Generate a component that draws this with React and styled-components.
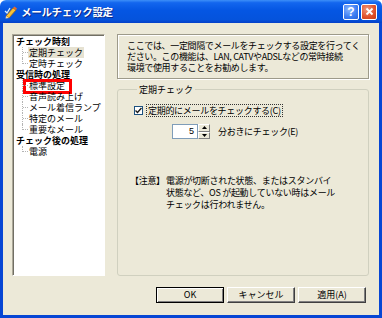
import React from 'react';
import styled, { createGlobalStyle } from 'styled-components';

const GlobalStyle = createGlobalStyle`
  html, body { margin: 0; padding: 0; }
  body {
    width: 382px;
    height: 318px;
    overflow: hidden;
    font-family: "Noto Sans CJK JP", "DejaVu Sans", sans-serif;
  }
`;

const Window = styled.div`
  width: 382px;
  height: 318px;
  display: flex;
  flex-direction: column;
`;

const TitleBar = styled.div`
  height: 23px;
  flex: none;
  display: flex;
  align-items: center;
  padding: 0 5px 0 4px;
  box-sizing: border-box;
  background: linear-gradient(#3d8ff8 0%, #1366ee 12%, #0556e3 45%, #0553dc 85%, #0440c8 100%);
  border-radius: 6px 6px 0 0;
`;

const TitleText = styled.span`
  margin-left: 3px;
  flex: 1;
  color: #fff;
  font-size: 10.5px;
  font-weight: bold;
  letter-spacing: -0.3px;
  text-shadow: 1px 1px 0 #0a2a8a;
`;

const CaptionButton = styled.div`
  width: 16px;
  height: 16px;
  margin-left: 2px;
  box-sizing: border-box;
  border: 1px solid #fff;
  border-radius: 2px;
  display: flex;
  align-items: center;
  justify-content: center;
  color: #fff;
  font-family: "Liberation Sans", sans-serif;
  font-weight: bold;
  font-size: 12px;
  background: ${p => p.close
    ? 'radial-gradient(circle at 35% 30%, #f0977a, #e0502a 60%, #c73b14)'
    : 'radial-gradient(circle at 35% 30%, #8ab6ff, #3a7cf2 60%, #2a62d8)'};
`;

const Frame = styled.div`
  flex: 1;
  display: flex;
  flex-direction: column;
  background: #ece9d8;
  border: 3px solid #0746d4;
  border-top: none;
  padding: 11px 10px 0 9px;
  font-size: 9px;
  color: #000;
`;

const Main = styled.div`
  display: flex;
  gap: 12px;
  height: 242px;
`;

const Tree = styled.div`
  width: 93px;
  flex: none;
  box-sizing: border-box;
  background: #fff;
  border: 1px solid;
  border-color: #aca899 #fff #fff #aca899;
  box-shadow: inset 1px 1px 0 #716f64;
  padding: 1px 0 0 2px;
`;

const Node = styled.div`
  position: relative;
  height: 11px;
  line-height: 11px;
  white-space: nowrap;
  font-weight: ${p => (p.group ? 'bold' : 'normal')};
  padding-left: ${p => (p.group ? 0 : 13)}px;

  ${p => !p.group && `
    &::before {
      content: '';
      position: absolute;
      left: 7px;
      top: 0;
      height: ${p.last ? 6 : 11}px;
      border-left: 1px dotted #b4b4b4;
    }
    &::after {
      content: '';
      position: absolute;
      left: 8px;
      top: 5px;
      width: 5px;
      border-top: 1px dotted #b4b4b4;
    }
  `}
`;

const NodeLabel = styled.span`
  position: relative;
  display: inline-block;
  height: 11px;
  padding: 0 1px;
  background: ${p => (p.selected ? '#e6e2d2' : 'transparent')};

  ${p => p.marked && `
    &::after {
      content: '';
      position: absolute;
      left: -5px;
      top: -1px;
      width: 43px;
      height: 9px;
      border: 3px solid #ff0000;
    }
  `}
`;

const Right = styled.div`
  flex: 1;
  display: flex;
  flex-direction: column;
`;

const InfoBox = styled.div`
  border: 1px solid #9d9a8a;
  box-shadow: 1px 1px 0 #fff, inset 1px 1px 0 #fff;
  padding: 5px 6px 5px 9px;
  line-height: 11px;
  letter-spacing: -0.35px;
`;

const Group = styled.fieldset`
  flex: 1;
  margin: 5px 0 0 0;
  padding: 0 0 0 16px;
  border: 1px solid #d0d0bf;
  border-radius: 3px;
  min-width: 0;
`;

const Legend = styled.legend`
  padding: 0 2px;
  margin-left: 3px;
  line-height: 11px;
`;

const CheckRow = styled.label`
  display: flex;
  align-items: center;
  margin-top: 9px;
  height: 12px;
`;

const CheckBox = styled.span`
  width: 9px;
  height: 9px;
  box-sizing: border-box;
  border: 1px solid #1c5180;
  background: #fff;
  display: flex;
  align-items: center;
  justify-content: center;
`;

const CheckText = styled.span`
  margin-left: 4px;
  padding: 0 1px;
  outline: 1px dotted #333;
  line-height: 11px;
  letter-spacing: -0.3px;
`;

const SpinRow = styled.div`
  display: flex;
  align-items: center;
  margin: 8px 0 0 38px;
  height: 15px;
`;

const SpinInput = styled.div`
  width: 26px;
  height: 15px;
  box-sizing: border-box;
  background: #fff;
  border: 1px solid #7f9db9;
  text-align: right;
  padding-right: 3px;
  line-height: 13px;
  font-family: "Liberation Sans", sans-serif;
  font-size: 9px;
`;

const SpinButtons = styled.div`
  display: flex;
  flex-direction: column;
  width: 12px;
  height: 15px;
`;

const SpinHalf = styled.div`
  flex: 1;
  box-sizing: border-box;
  background: #ece9d8;
  border: 1px solid;
  border-color: #fff #808080 #808080 #fff;
  display: flex;
  align-items: center;
  justify-content: center;
`;

const SpinLabel = styled.span`
  margin-left: 8px;
  letter-spacing: -0.3px;
`;

const Note = styled.div`
  display: flex;
  margin: 36px 0 0 -4px;
  line-height: 12px;
  letter-spacing: -0.3px;
`;

const NoteTag = styled.span`
  flex: none;
  width: 36px;
`;

const ButtonRow = styled.div`
  display: flex;
  justify-content: flex-end;
  gap: 3px;
  padding: 11px 3px 0 0;
`;

const Button = styled.button`
  width: 68px;
  height: 16px;
  padding: 0;
  box-sizing: border-box;
  font-family: inherit;
  font-size: 9px;
  line-height: 12px;
  color: #000;
  background: #ece9d8;
  border: 1px solid;
  border-color: ${p => (p.primary ? '#000' : '#fff #404040 #404040 #fff')};
  box-shadow: ${p => (p.primary
    ? 'inset 1px 1px 0 #fff, inset -1px -1px 0 #808080'
    : 'inset -1px -1px 0 #808080')};
`;

const TitleIcon = () => (
  <svg width="14" height="14" viewBox="0 0 14 14">
    <path d="M2 11 L9 3 L12 5 L5 13 Z" fill="#f6c338" stroke="#a0661a" strokeWidth="0.8" />
    <path d="M2 11 L5 13 L1.5 13.5 Z" fill="#f3e1b0" />
    <path d="M9 3 L10.5 1.5 L13 3.5 L12 5 Z" fill="#e86a2a" />
    <path d="M1 6 L3 8 L6 3" fill="none" stroke="#d8f0ff" strokeWidth="1.3" />
  </svg>
);

const treeItems = [
  { label: 'チェック時刻', group: true },
  { label: '定期チェック', selected: true },
  { label: '定時チェック', last: true },
  { label: '受信時の処理', group: true },
  { label: '標準設定', marked: true },
  { label: '音声読み上げ' },
  { label: 'メール着信ランプ' },
  { label: '特定のメール' },
  { label: '重要なメール', last: true },
  { label: 'チェック後の処理', group: true },
  { label: '電源', last: true },
];

export default function App() {
  return (
    <Window>
      <GlobalStyle />
      <TitleBar>
        <TitleIcon />
        <TitleText>メールチェック設定</TitleText>
        <CaptionButton>?</CaptionButton>
        <CaptionButton close>
          <svg width="9" height="9" viewBox="0 0 9 9">
            <path d="M1.5 1.5 L7.5 7.5 M7.5 1.5 L1.5 7.5" stroke="#fff" strokeWidth="1.8" />
          </svg>
        </CaptionButton>
      </TitleBar>
      <Frame>
        <Main>
          <Tree>
            {treeItems.map(item => (
              <Node key={item.label} group={item.group} last={item.last}>
                <NodeLabel selected={item.selected} marked={item.marked}>{item.label}</NodeLabel>
              </Node>
            ))}
          </Tree>
          <Right>
            <InfoBox>
              ここでは、一定間隔でメールをチェックする設定を行ってく<br />
              ださい。この機能は、LAN, CATVやADSLなどの常時接続<br />
              環境で使用することをお勧めします。
            </InfoBox>
            <Group>
              <Legend>定期チェック</Legend>
              <CheckRow>
                <CheckBox>
                  <svg width="7" height="7" viewBox="0 0 7 7">
                    <path d="M0.5 3.5 L2.5 5.5 L6.5 1" fill="none" stroke="#1a1a1a" strokeWidth="1.4" />
                  </svg>
                </CheckBox>
                <CheckText>定期的にメールをチェックする(C)</CheckText>
              </CheckRow>
              <SpinRow>
                <SpinInput>5</SpinInput>
                <SpinButtons>
                  <SpinHalf>
                    <svg width="5" height="3" viewBox="0 0 5 3"><path d="M0 3 L2.5 0 L5 3 Z" fill="#000" /></svg>
                  </SpinHalf>
                  <SpinHalf>
                    <svg width="5" height="3" viewBox="0 0 5 3"><path d="M0 0 L2.5 3 L5 0 Z" fill="#000" /></svg>
                  </SpinHalf>
                </SpinButtons>
                <SpinLabel>分おきにチェック(E)</SpinLabel>
              </SpinRow>
              <Note>
                <NoteTag>【注意】</NoteTag>
                <div>
                  電源が切断された状態、またはスタンバイ<br />
                  状態など、OS が起動していない時はメール<br />
                  チェックは行われません。
                </div>
              </Note>
            </Group>
          </Right>
        </Main>
        <ButtonRow>
          <Button primary>OK</Button>
          <Button>キャンセル</Button>
          <Button>適用(A)</Button>
        </ButtonRow>
      </Frame>
    </Window>
  );
}
